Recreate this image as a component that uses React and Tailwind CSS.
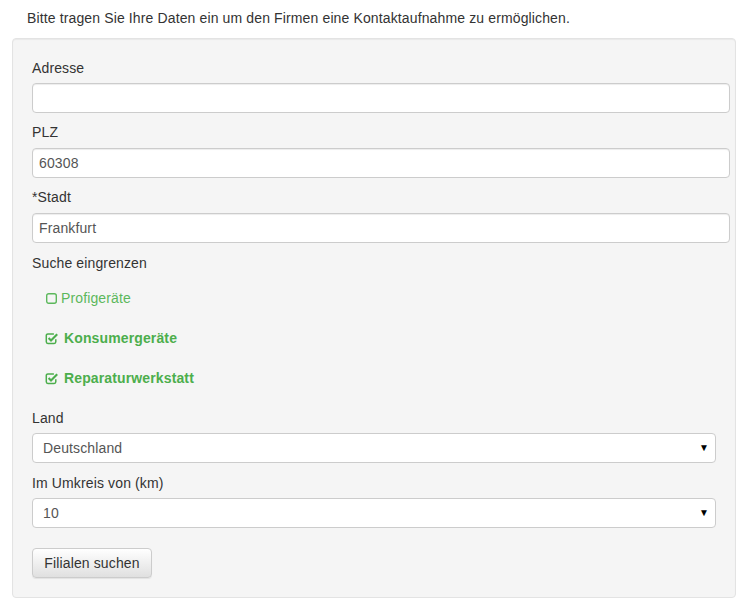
import React from "react";

function SquareIcon() {
  return (
    <svg width="13" height="13" viewBox="0 0 13 13" className="shrink-0">
      <rect x="1.7" y="1.7" width="9.6" height="9.6" rx="2" fill="none" stroke="#5cb85c" strokeWidth="1.4" />
    </svg>
  );
}

function CheckSquareIcon() {
  return (
    <svg width="13" height="13" viewBox="0 0 13 13" className="shrink-0">
      <path d="M10.8 7.2V9.8a1.6 1.6 0 0 1-1.6 1.6H2.9A1.6 1.6 0 0 1 1.3 9.8V3.5A1.6 1.6 0 0 1 2.9 1.9h6" fill="none" stroke="#4cae4c" strokeWidth="1.5" />
      <path d="M3.6 6 L6 8.4 L12.2 2.2" fill="none" stroke="#4cae4c" strokeWidth="2.1" />
    </svg>
  );
}

function Label({ children, className = "" }) {
  return <div className={"h-5 leading-5 text-[14px] text-[#333] " + className}>{children}</div>;
}

function TextInput({ value }) {
  return (
    <div className="w-[698px] h-[30px] rounded-[4px] border border-[#ccc] bg-white shadow-[inset_0_1px_1px_rgba(0,0,0,0.075)] flex items-center pl-[6px] text-[14px] text-[#555]">
      {value}
    </div>
  );
}

function Select({ value }) {
  return (
    <div className="w-full h-[30px] rounded-[4px] border border-[#ccc] bg-white flex items-center justify-between pl-[10px] pr-[6px] text-[14px] text-[#555]">
      <span>{value}</span>
      <span className="text-[10px] text-black leading-none">▼</span>
    </div>
  );
}

export default function App() {
  return (
    <div className="w-[751px] h-[612px] bg-white font-['Liberation_Sans',Arial,sans-serif] text-[14px] text-[#333] tracking-[0.13px]">
      <div className="pt-[8px] pl-[27px] h-5 leading-5 box-content">
        Bitte tragen Sie Ihre Daten ein um den Firmen eine Kontaktaufnahme zu ermöglichen.
      </div>
      <div className="mt-[10px] ml-[12px] w-[724px] rounded-[4px] border border-[#e3e3e3] bg-[#f5f5f5] shadow-[inset_0_1px_1px_rgba(0,0,0,0.05)] p-[19px]">
        <Label>Adresse</Label>
        <div className="mt-[5px]">
          <TextInput value="" />
        </div>
        <Label className="mt-[9px]">PLZ</Label>
        <div className="mt-[6px]">
          <TextInput value="60308" />
        </div>
        <Label className="mt-[9px]">*Stadt</Label>
        <div className="mt-[6px]">
          <TextInput value="Frankfurt" />
        </div>
        <Label className="mt-[10px]">Suche eingrenzen</Label>
        <div className="pl-[13px] mt-[15px] flex flex-col gap-5 text-[#5cb85c]">
          <div className="h-5 flex items-center gap-[3px]">
            <SquareIcon />
            <span>Profigeräte</span>
          </div>
          <div className="h-5 flex items-center gap-[6px] font-bold text-[#4cae4c]">
            <CheckSquareIcon />
            <span>Konsumergeräte</span>
          </div>
          <div className="h-5 flex items-center gap-[6px] font-bold text-[#4cae4c]">
            <CheckSquareIcon />
            <span>Reparaturwerkstatt</span>
          </div>
        </div>
        <Label className="mt-[20px]">Land</Label>
        <div className="mt-[5px]">
          <Select value="Deutschland" />
        </div>
        <Label className="mt-[10px]">Im Umkreis von (km)</Label>
        <div className="mt-[5px]">
          <Select value="10" />
        </div>
        <div className="mt-[20px]">
          <button className="h-[30px] w-[120px] rounded-[4px] border border-[#ccc] bg-gradient-to-b from-white to-[#e0e0e0] text-[14px] text-[#333] tracking-[0.13px] shadow-[inset_0_1px_0_rgba(255,255,255,0.15),0_1px_1px_rgba(0,0,0,0.075)]">
            Filialen suchen
          </button>
        </div>
      </div>
    </div>
  );
}
